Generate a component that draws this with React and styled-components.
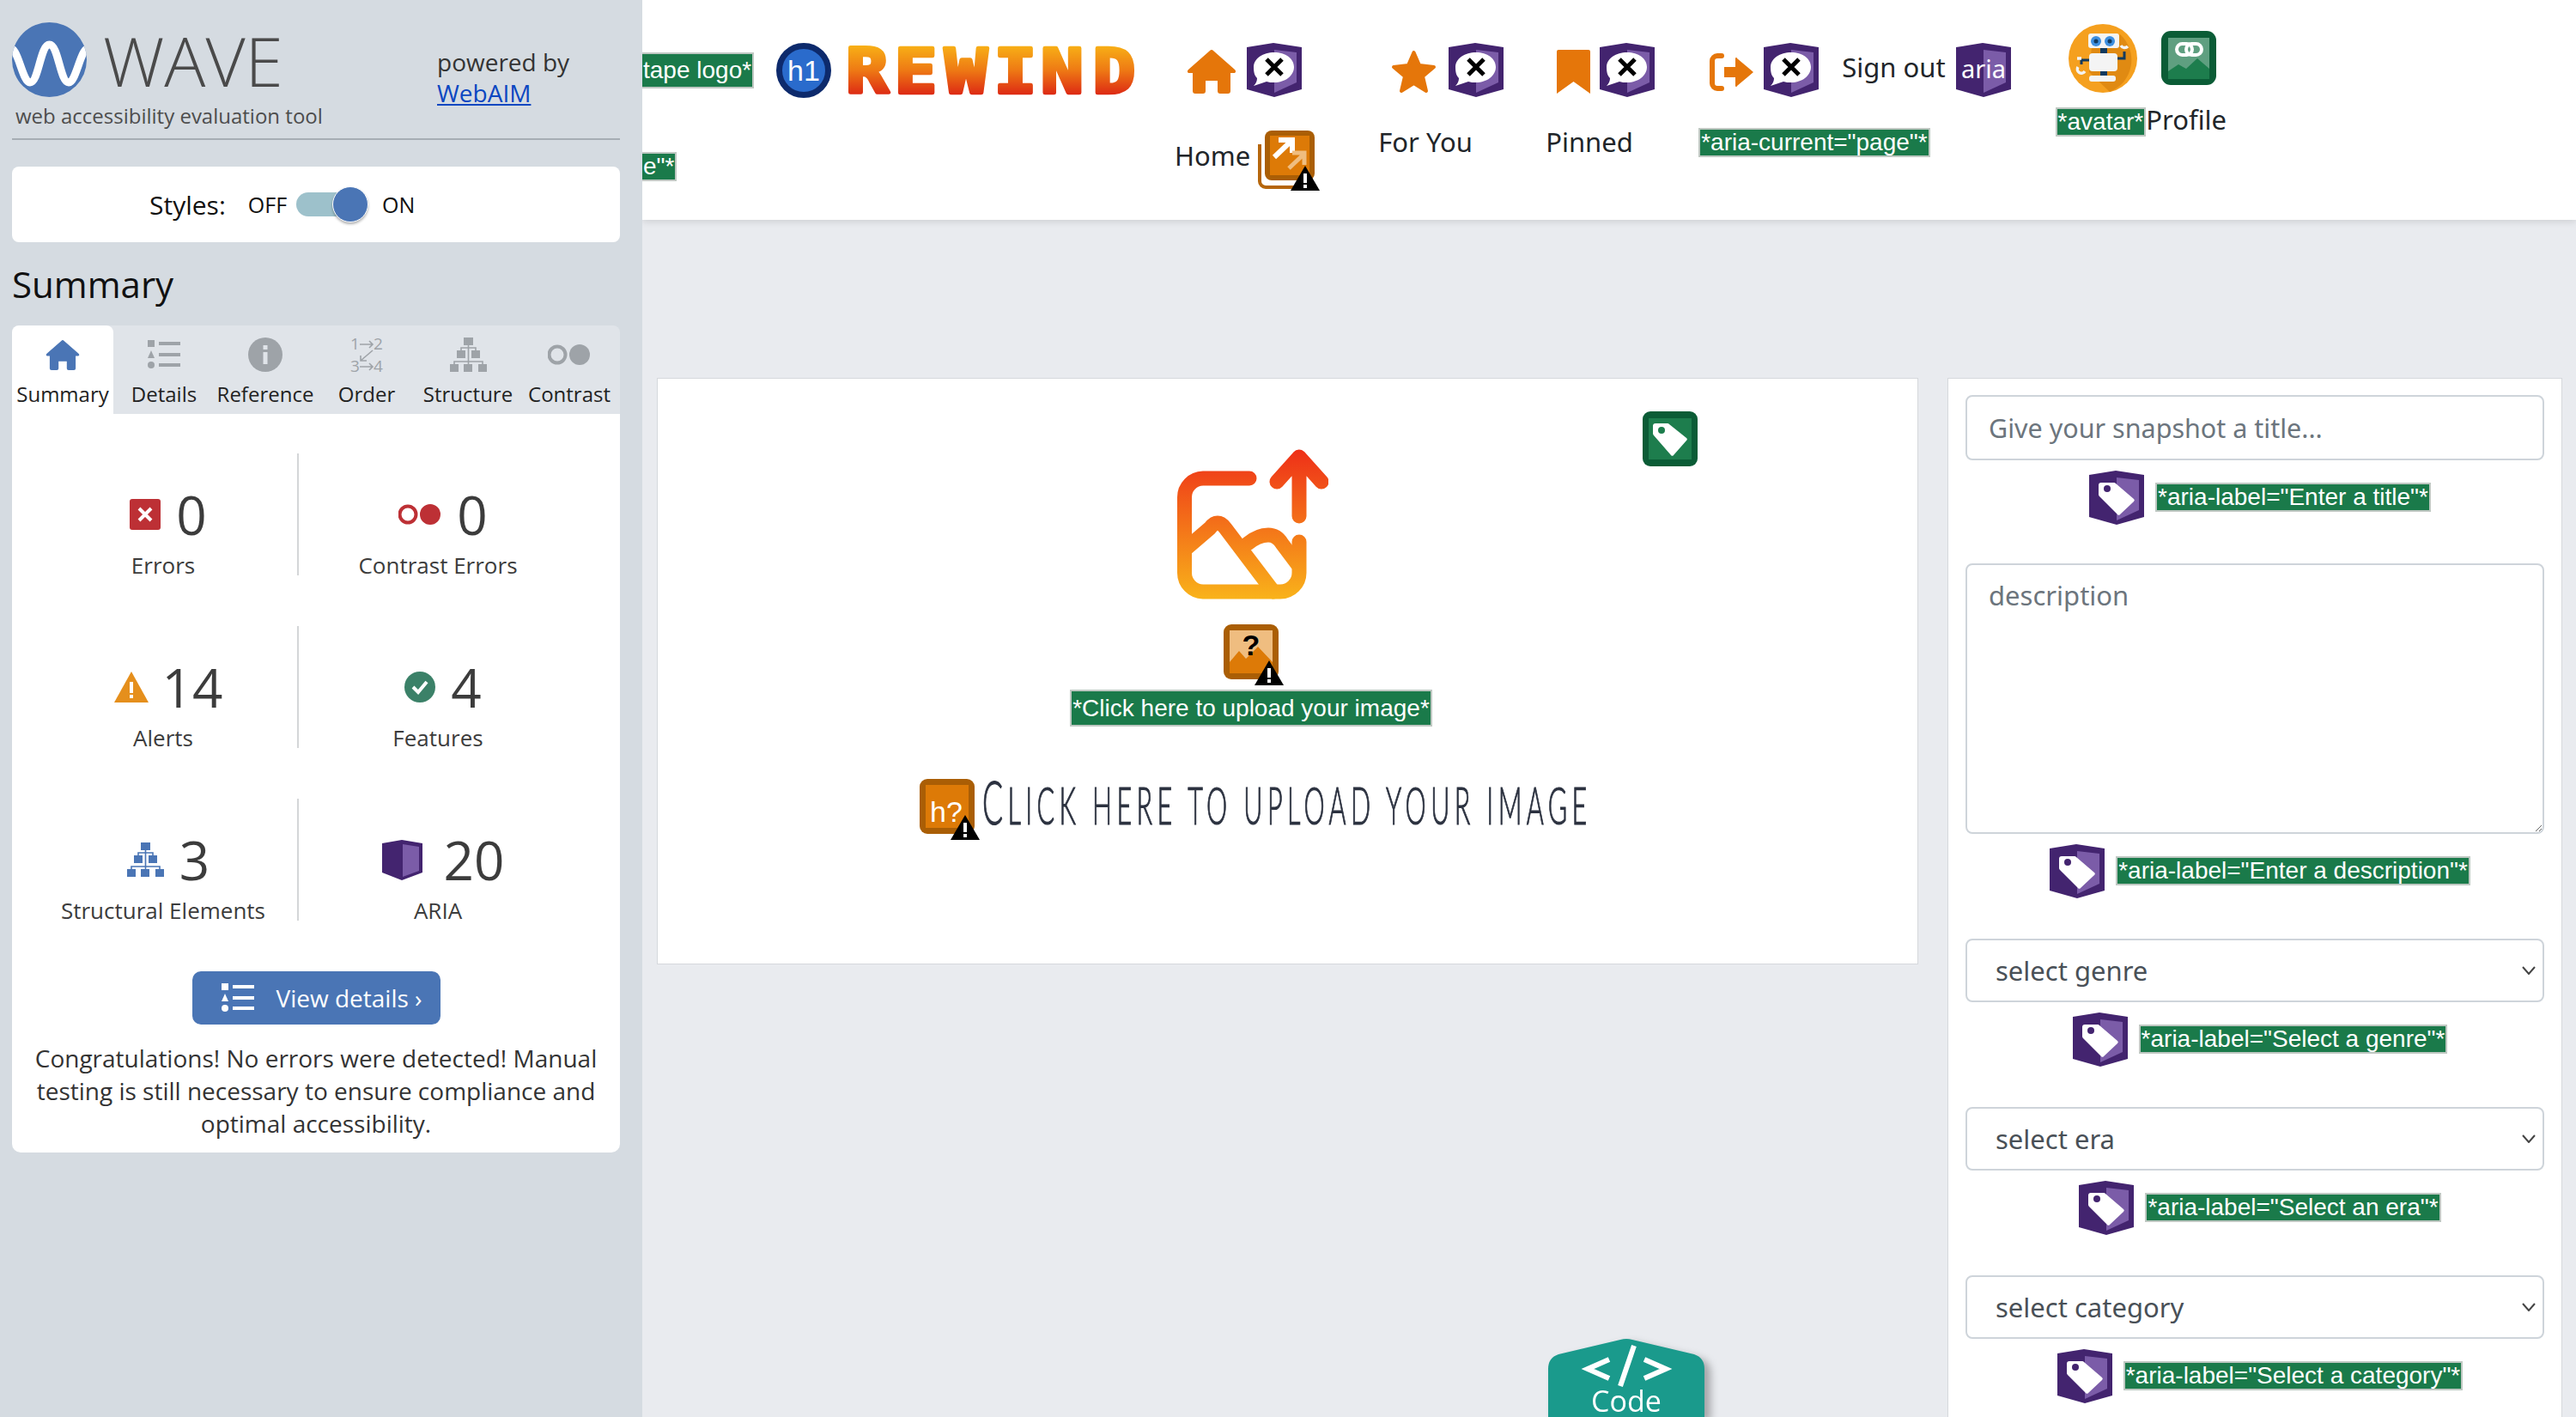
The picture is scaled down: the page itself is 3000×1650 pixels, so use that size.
import styled, { createGlobalStyle } from "styled-components";

const GlobalStyle = createGlobalStyle`
    html, body {
        margin: 0;
        padding: 0;
        background: #e9ebef;
    }
    * {
        box-sizing: border-box;
    }
`;

const sideFont = `"Open Sans", "Noto Sans", sans-serif`;
const pageFont = `"Noto Sans", "Open Sans", sans-serif`;
const labelFont = `"Liberation Sans", Arial, sans-serif`;

const Page = styled.div`
    display: flex;
    width: 3000px;
    height: 1650px;
    overflow: hidden;
    position: relative;
    background: #e9ebef;
`;

/* ---------- WAVE sidebar ---------- */

const Sidebar = styled.aside`
    flex: 0 0 748px;
    height: 100%;
    padding: 26px 26px 0 14px;
    background: #d5dbe1;
    font-family: ${sideFont};
    color: #333;
    z-index: 2;
`;

const Brand = styled.div`
    display: flex;
    height: 137px;
    border-bottom: 2px solid #a6adb4;
`;

const BrandLeft = styled.div`
    flex: 0 0 495px;
`;

const LogoRow = styled.div`
    display: flex;
    align-items: center;
    gap: 19px;
    height: 87px;
`;

const WaveName = styled.div`
    font-size: 80px;
    font-weight: 300;
    line-height: 87px;
    color: #4a4a4a;
`;

const Tagline = styled.div`
    margin: 4px 0 0 4px;
    font-size: 24px;
    line-height: 36px;
    color: #4d4d4d;
`;

const Powered = styled.div`
    padding-top: 28px;
    font-size: 28px;
    line-height: 36px;
    color: #333;
    a {
        color: #0b47c1;
        text-decoration: underline;
    }
`;

const StylesBox = styled.div`
    display: flex;
    align-items: center;
    height: 88px;
    margin-top: 31px;
    padding-left: 160px;
    background: #fff;
    border-radius: 8px;
    color: #111;
`;

const StylesLabel = styled.span`
    font-size: 30px;
    margin-right: 26px;
`;

const OnOff = styled.span`
    font-size: 25px;
`;

const Track = styled.span`
    position: relative;
    display: block;
    width: 84px;
    height: 28px;
    margin: 0 16px 0 11px;
    border-radius: 14px;
    background: #9dc1cb;
`;

const Knob = styled.span`
    position: absolute;
    right: 0;
    top: -7px;
    width: 42px;
    height: 42px;
    border-radius: 50%;
    background: #4a75b5;
    border: 1px solid #fff;
    box-shadow: 0 2px 3px rgba(0, 0, 0, 0.3);
`;

const Heading = styled.h2`
    margin: 20px 0 0;
    height: 77px;
    font-size: 42px;
    font-weight: 400;
    line-height: 58px;
    color: #111;
`;

const Tabs = styled.div`
    display: grid;
    grid-template-columns: repeat(6, 1fr);
    height: 103px;
    background: #e0e4e9;
    border-radius: 8px 8px 0 0;
`;

const Tab = styled.div`
    display: flex;
    flex-direction: column;
    align-items: center;
    padding-top: 12px;
    background: ${(p) => (p.$active ? "#fff" : "transparent")};
    border-radius: 8px 8px 0 0;
    color: ${(p) => (p.$active ? "#4a75b5" : "#9ea3a8")};
`;

const TabIcon = styled.span`
    display: flex;
    align-items: center;
    justify-content: center;
    height: 44px;
`;

const TabLabel = styled.span`
    margin-top: 7px;
    font-size: 24px;
    line-height: 34px;
    color: #222;
    white-space: nowrap;
`;

const SummaryPanel = styled.div`
    height: 860px;
    padding-top: 46px;
    background: #fff;
    border-radius: 0 0 10px 10px;
`;

const StatGrid = styled.div`
    display: grid;
    grid-template-columns: 312px 326px;
    grid-auto-rows: 142px;
    row-gap: 59px;
    margin-left: 20px;
`;

const Stat = styled.div`
    display: flex;
    flex-direction: column;
    align-items: center;
    padding-top: 40px;
    border-left: ${(p) => (p.$divided ? "2px solid #d4d6d8" : "none")};
`;

const StatTop = styled.div`
    display: flex;
    align-items: center;
    gap: ${(p) => p.$gap || 18}px;
    height: 62px;
    padding-left: 12px;
`;

const StatNum = styled.span`
    font-size: 62px;
    line-height: 62px;
    color: #3c3c3c;
`;

const StatLabel = styled.div`
    margin-top: 10px;
    font-size: 26px;
    line-height: 36px;
    color: #3c3c3c;
    white-space: nowrap;
`;

const DetailsButton = styled.div`
    display: flex;
    align-items: center;
    gap: 26px;
    width: 289px;
    height: 62px;
    margin: 59px auto 0;
    padding-left: 34px;
    background: #4a75b5;
    border-radius: 10px;
    color: #fff;
    font-size: 28px;
`;

const Congrats = styled.p`
    margin: 20px 0 0;
    padding: 0 20px;
    text-align: center;
    font-size: 28px;
    line-height: 38px;
    color: #333;
`;

/* ---------- app page ---------- */

const Content = styled.div`
    flex: 1;
    min-width: 0;
    font-family: ${pageFont};
    color: #212529;
`;

const Header = styled.header`
    display: flex;
    align-items: flex-start;
    height: 256px;
    background: #fff;
    box-shadow: 0 2px 8px rgba(0, 0, 0, 0.12);
`;

const CutLabels = styled.div`
    flex: 0 0 156px;
    display: flex;
    flex-direction: column;
    align-items: flex-start;
    padding-top: 61px;
`;

const Label = styled.span`
    display: inline-flex;
    align-items: center;
    flex: none;
    height: ${(p) => p.$h || 34}px;
    margin-top: ${(p) => p.$top || 0}px;
    padding: 0 1px;
    border: 2px solid #bfc8c2;
    border-left-width: ${(p) => (p.$cut ? 0 : 2)}px;
    background: #1a7a4a;
    color: #fff;
    font-family: ${labelFont};
    font-size: 28px;
    white-space: nowrap;
`;

const H1Badge = styled.span`
    flex: none;
    display: flex;
    align-items: center;
    justify-content: center;
    width: 64px;
    height: 64px;
    margin-top: 50px;
    border-radius: 50%;
    border: 7px solid #0d2a6c;
    background: #2a6bcc;
    color: #fff;
    font-family: ${labelFont};
    font-size: 34px;
`;

const RewindSvg = styled.svg`
    flex: none;
    display: block;
    margin: 53px 0 0 17px;
    overflow: visible;
`;

const NavItem = styled.div`
    flex: none;
    margin-left: ${(p) => p.$left}px;
    padding-top: ${(p) => p.$top || 50}px;
`;

const IconRow = styled.div`
    display: flex;
    align-items: ${(p) => p.$align || "center"};
    gap: ${(p) => p.$gap || 12}px;
    padding-left: ${(p) => p.$inset || 0}px;
`;

const NavText = styled.span`
    font-size: 31px;
    line-height: 40px;
    white-space: nowrap;
`;

const HomeText = styled(NavText)`
    margin-top: 9px;
`;

const SignOutText = styled(NavText)`
    margin: 0 0 8px 15px;
`;

const ProfileText = styled(NavText)`
    margin-bottom: 5px;
`;

const NavBelow = styled.div`
    display: flex;
    align-items: ${(p) => p.$align || "center"};
    margin-top: ${(p) => p.$top || 32}px;
    gap: ${(p) => p.$gap || 0}px;
`;

const NudgedSvg = styled.svg`
    flex: none;
    margin-top: 4px;
    color: #e5760a;
`;

const ShieldSvg = styled.svg`
    flex: none;
    display: block;
`;

const AriaWord = styled.text`
    fill: #fff;
    font-family: ${pageFont};
    font-size: 29px;
`;

const AlertWrap = styled.span`
    position: relative;
    flex: none;
    display: block;
    width: ${(p) => p.$w || 64}px;
    height: ${(p) => p.$h || 64}px;
    svg {
        display: block;
    }
`;

const TriangleSpot = styled.span`
    position: absolute;
    left: ${(p) => p.$x}px;
    top: ${(p) => p.$y}px;
`;

const Body = styled.main`
    display: grid;
    grid-template-columns: 1469px 716px;
    gap: 34px;
    padding: 184px 16px 0 17px;
`;

const UploadCard = styled.section`
    position: relative;
    display: flex;
    justify-content: center;
    height: 683px;
    padding: 82px 85px 0 0;
    background: #fff;
    border: 1px solid #d5d8dc;
`;

const UploadColumn = styled.div`
    display: flex;
    flex-direction: column;
    align-items: center;
`;

const GreenTag = styled.span`
    position: absolute;
    top: 38px;
    right: 256px;
`;

const AlertSpaced = styled.div`
    margin-top: 29px;
`;

const HeadlineRow = styled.div`
    display: flex;
    margin-top: 61px;
    width: 776px;
    margin-left: 4px;
`;

const Headline = styled.div`
    flex: none;
    width: 699px;
    margin: -2px 0 0 9px;
    font-family: Lato, "Open Sans", sans-serif;
    font-weight: 300;
    font-size: 61px;
    line-height: 56px;
    letter-spacing: 10.8px;
    text-transform: uppercase;
    white-space: nowrap;
    color: #2c3240;
    transform: scaleX(0.5);
    transform-origin: left top;
    -webkit-text-stroke: 1.2px #2c3240;
    &::first-letter {
        font-size: 71px;
    }
`;

const FormCard = styled.section`
    height: 1300px;
    padding: 19px 20px 0;
    background: #fff;
    border: 1px solid #d5d8dc;
`;

const TextInput = styled.input`
    display: block;
    width: 100%;
    height: 76px;
    padding: 0 25px;
    border: 2px solid #ced4da;
    border-radius: 8px;
    font-family: ${pageFont};
    font-size: 30.5px;
    &::placeholder {
        color: #6c757d;
        opacity: 1;
    }
`;

const TextArea = styled.textarea`
    display: block;
    width: 100%;
    height: 315px;
    margin-top: 45px;
    padding: 12px 25px;
    border: 2px solid #ced4da;
    border-radius: 8px;
    font-family: ${pageFont};
    font-size: 31px;
    line-height: 46px;
    &::placeholder {
        color: #6c757d;
        opacity: 1;
    }
`;

const SelectBox = styled.select`
    display: block;
    width: 100%;
    height: 74px;
    margin-top: 47px;
    padding: 0 40px 0 33px;
    appearance: none;
    background: #fff url("data:image/svg+xml,%3Csvg xmlns='http://www.w3.org/2000/svg' width='16' height='10'%3E%3Cpath d='M1 1l7 8 7-8' fill='none' stroke='%23444' stroke-width='2'/%3E%3C/svg%3E") no-repeat right 8px center;
    border: 2px solid #ced4da;
    border-radius: 8px;
    font-family: ${pageFont};
    font-size: 31px;
    color: #495057;
`;

const AriaRow = styled.div`
    display: flex;
    justify-content: center;
    align-items: center;
    gap: 13px;
    height: 64px;
    margin-top: 11px;
    padding-left: 12px;
`;

const CodeBadge = styled.div`
    position: absolute;
    left: 1803px;
    bottom: 0;
    filter: drop-shadow(7px 5px 5px rgba(0, 0, 0, 0.3));
    z-index: 1;
`;

const CodeShape = styled.div`
    width: 182px;
    height: 91px;
    background: #1a9a8c;
    clip-path: path("M0 91V35Q0 22 12 18L84 1Q91 -1 98 1L170 18Q182 22 182 35V91Z");
    color: #fff;
    text-align: center;
    font-family: ${sideFont};
    font-size: 34px;
    line-height: 28px;
    svg {
        display: block;
    }
`;

const UploadSvg = styled.svg`
    display: block;
    margin-left: 3px;
`;

const OrderSvg = styled.svg`
    overflow: visible;
`;

const LinkImageSvg = styled.svg`
    display: block;
    margin-top: 8px;
`;

/* ---------- drawings ---------- */

const WaveLogo = () => (
    <svg width="87" height="87" viewBox="0 0 87 87">
        <clipPath id="waveClip">
            <circle cx="43.5" cy="43.5" r="43.5" />
        </clipPath>
        <circle cx="43.5" cy="43.5" r="43.5" fill="#4a75b5" />
        <path
            clipPath="url(#waveClip)"
            d="M-4 32C6 22 12 71 21 70C31 70 33 26 43.5 26C54 26 56 70 66 70C75 71 81 22 91 32"
            fill="none"
            stroke="#fff"
            strokeWidth="9"
        />
    </svg>
);

const RewindLogo = () => (
    <RewindSvg width="337" height="57" viewBox="0 0 337 57">
        <defs>
            <linearGradient id="rewindGrad" gradientUnits="userSpaceOnUse" x1="0" y1="0" x2="0" y2="57">
                <stop offset="0" stopColor="#f8b016" />
                <stop offset="0.5" stopColor="#ee7a14" />
                <stop offset="1" stopColor="#dd2a14" />
            </linearGradient>
        </defs>
        <g transform="scale(1.14 1)">
            <text
                x="22 71.500 122.800 173.200 221 274"
                y="55"
                textAnchor="middle"
                fontFamily={`"DejaVu Sans Mono", monospace`}
                fontWeight="700"
                fontSize="72"
                fill="url(#rewindGrad)"
                stroke="url(#rewindGrad)"
                strokeWidth="4.500"
                strokeLinejoin="round"
            >
                REWIND
            </text>
        </g>
    </RewindSvg>
);

const DetailsGlyph = ({ w = 38, h = 34, fill = "currentColor" }) => (
    <svg width={w} height={h} viewBox="0 0 38 34" fill={fill}>
        <rect x="0" y="0" width="8" height="8" />
        <path d="M4 12l4 9H0z" />
        <circle cx="4" cy="29" r="4" />
        <rect x="13" y="2" width="25" height="4" />
        <rect x="13" y="15" width="25" height="4" />
        <rect x="13" y="27" width="25" height="4" />
    </svg>
);

const TreeGlyph = ({ w = 43, h = 40, fill = "currentColor" }) => (
    <svg width={w} height={h} viewBox="0 0 43 40" fill={fill} stroke={fill}>
        <g stroke="none">
            <rect x="16" y="0" width="11" height="9" />
            <rect x="8" y="15" width="10" height="9" />
            <rect x="25" y="15" width="10" height="9" />
            <rect x="0" y="31" width="10" height="9" />
            <rect x="16" y="31" width="10" height="9" />
            <rect x="33" y="31" width="10" height="9" />
        </g>
        <path d="M21.5 9v22M13 15v-3h17v3M5 31v-3h33v3" fill="none" strokeWidth="1.6" />
    </svg>
);

const RingDot = ({ fill = "currentColor", w = 50, h = 24 }) => (
    <svg width={w} height={h} viewBox="0 0 50 24">
        <circle cx="11" cy="12" r="9.5" fill="none" stroke={fill} strokeWidth="4" />
        <circle cx="37" cy="12" r="12" fill={fill} />
    </svg>
);

const housePath =
    "M29 0a3 3 0 0 1 2 1l25 22c2 2 1 4-1 4h-4v21a3 3 0 0 1-3 3h-9a3 3 0 0 1-3-3V36H22v12a3 3 0 0 1-3 3H10a3 3 0 0 1-3-3V27H3c-2 0-3-2-1-4L27 1a3 3 0 0 1 2-1z";

const InfoGlyph = () => (
    <svg width="40" height="40" viewBox="0 0 40 40">
        <circle cx="20" cy="20" r="20" fill="currentColor" />
        <rect x="17.5" y="17" width="5" height="14" fill="#e0e4e9" />
        <rect x="17.5" y="9" width="5" height="5" fill="#e0e4e9" />
    </svg>
);

const OrderGlyph = () => (
    <OrderSvg width="40" height="44" viewBox="0 0 40 44" fill="currentColor" stroke="currentColor">
        <g stroke="none" fontSize="19" fontFamily={sideFont}>
            <text x="1" y="16">1</text>
            <text x="28" y="16">2</text>
            <text x="1" y="42">3</text>
            <text x="28" y="42">4</text>
        </g>
        <path d="M12 10h15M23 6l4 4-4 4M12 36h15M23 32l4 4-4 4M27 17L13 29M13 23v6h7" fill="none" strokeWidth="1.6" />
    </OrderSvg>
);

const ErrorIcon = () => (
    <svg width="36" height="36" viewBox="0 0 36 36">
        <rect width="36" height="36" rx="3" fill="#bd3035" />
        <path d="M11 11l14 14M25 11L11 25" stroke="#fff" strokeWidth="4" />
    </svg>
);

const AlertIcon = () => (
    <svg width="40" height="36" viewBox="0 0 40 36">
        <path d="M20 0l20 36H0z" fill="#e58f1c" />
        <rect x="18" y="12" width="4" height="13" fill="#fff" />
        <rect x="18" y="27" width="4" height="4" fill="#fff" />
    </svg>
);

const CheckIcon = () => (
    <svg width="36" height="36" viewBox="0 0 36 36">
        <circle cx="18" cy="18" r="18" fill="#3b8168" />
        <path d="M10 18l6 6 10-12" fill="none" stroke="#fff" strokeWidth="4" />
    </svg>
);

const AriaBook = () => (
    <svg width="47" height="47" viewBox="0 0 47 47">
        <path d="M0 4L23 0l24 4v34l-24 9L0 38z" fill="#43246f" />
        <path d="M24 5l19 3v28l-19 7z" fill="#7b5ca8" />
    </svg>
);

const Shield = ({ kind, word }) => (
    <ShieldSvg width="64" height="63" viewBox="0 0 64 63">
        <path d="M0 5L31 0l33 5v49L32 63 0 54z" fill="#43246f" />
        <path d="M32 8l26 3v35L32 58z" fill="#7b5ca8" />
        {kind === "x" && (
            <>
                <path d="M32 11c13 0 23 7 23 17s-10 18-23 18c-4 0-6 0-9-1l-15 5c3-3 4-6 4-9-3-3-4-7-4-13 0-10 11-17 24-17z" fill="#fff" />
                <path d="M23 19l18 18M41 19L23 37" stroke="#000" strokeWidth="5" />
            </>
        )}
        {kind === "tag" && (
            <>
                <path d="M14 14h15a3 3 0 0 1 2 1l21 18a2 2 0 0 1 0 3L36 51a2 2 0 0 1-3 0L12 30a3 3 0 0 1-1-2V17a3 3 0 0 1 3-3z" fill="#fff" />
                <circle cx="21" cy="21" r="4" fill="#43246f" />
            </>
        )}
        {kind === "aria" && (
            <AriaWord x="32" y="41" textAnchor="middle">
                {word}
            </AriaWord>
        )}
    </ShieldSvg>
);

const Warn = ({ x, y }) => (
    <TriangleSpot $x={x} $y={y}>
        <svg width="34" height="29" viewBox="0 0 34 29">
            <path d="M17 0l17 29H0z" fill="#000" />
            <rect x="15" y="9" width="4" height="11" fill="#fff" />
            <rect x="15" y="22" width="4" height="4" fill="#fff" />
        </svg>
    </TriangleSpot>
);

const UnknownImage = () => (
    <AlertWrap>
        <svg width="64" height="64" viewBox="0 0 64 64">
            <rect width="64" height="64" rx="9" fill="#aa5e05" />
            <rect x="7" y="7" width="50" height="50" fill="#efbd80" />
            <path d="M7 57V44l11-13 8 9 14-14 17 18v13z" fill="#dd7a07" />
            <text x="32" y="36" textAnchor="middle" fontSize="34" fontWeight="700" fontFamily={labelFont}>
                ?
            </text>
        </svg>
        <Warn x={36} y={42} />
    </AlertWrap>
);

const HeadingAlert = () => (
    <AlertWrap>
        <svg width="64" height="64" viewBox="0 0 64 64">
            <rect width="64" height="64" rx="9" fill="#aa5e05" />
            <rect x="7" y="7" width="50" height="50" fill="#dd7a07" />
            <text x="31" y="50" textAnchor="middle" fontSize="34" fill="#fff" fontFamily={labelFont}>
                h?
            </text>
        </svg>
        <Warn x={36} y={42} />
    </AlertWrap>
);

const NewWindowAlert = () => (
    <AlertWrap $w={72} $h={70}>
        <svg width="72" height="70" viewBox="0 0 72 70">
            <path d="M2 16v43a7 7 0 0 0 7 7h34" fill="none" stroke="#b5650a" strokeWidth="4" />
            <rect x="8" y="0" width="58" height="58" rx="8" fill="#aa5e05" />
            <rect x="14" y="6" width="46" height="46" fill="#dd7a07" />
            <path d="M19 31l21-20M24 11h16v15" fill="none" stroke="#fff" strokeWidth="6" />
            <path d="M36 44l18-17M40 26h14v14" fill="none" stroke="#efbd80" strokeWidth="5" />
        </svg>
        <Warn x={38} y={41} />
    </AlertWrap>
);

const GreenTagIcon = () => (
    <svg width="64" height="64" viewBox="0 0 64 64" display="block">
        <rect width="64" height="64" rx="9" fill="#0b5c36" />
        <rect x="7" y="8" width="50" height="48" fill="#1d7d4d" />
        <path d="M15 14h14a3 3 0 0 1 2 1l20 16a2 2 0 0 1 0 3L36 51a2 2 0 0 1-3 0L13 28a3 3 0 0 1-1-2V17a3 3 0 0 1 3-3z" fill="#fff" />
        <circle cx="22" cy="22" r="4" fill="#1d7d4d" />
    </svg>
);

const UploadArt = () => (
    <UploadSvg width="176" height="175" viewBox="0 0 176 175">
        <defs>
            <linearGradient id="uploadGrad" gradientUnits="userSpaceOnUse" x1="0" y1="0" x2="0" y2="175">
                <stop offset="0" stopColor="#ee2f18" />
                <stop offset="1" stopColor="#f9b31a" />
            </linearGradient>
        </defs>
        <g fill="none" stroke="url(#uploadGrad)" strokeWidth="17" strokeLinecap="round" strokeLinejoin="round">
            <path d="M84 34H30A22 22 0 0 0 8.500 56V144A22 22 0 0 0 30 166H120A22 22 0 0 0 142 144V108" />
            <path d="M142 78V10M116 38L142 9l26 29" />
            <path d="M10 116L38 92Q47 80 56 92L112 166" />
            <path d="M82 110Q94 100 106 100Q116 100 122 110L140 134" />
        </g>
    </UploadSvg>
);

const Avatar = () => (
    <svg width="80" height="80" viewBox="0 0 80 80" display="block">
        <circle cx="40" cy="40" r="40" fill="#f5a01f" />
        <path d="M60 12a40 40 0 0 1-12 67L24 56l3-30z" fill="#e08a12" />
        <rect x="23" y="11" width="36" height="17" rx="3" fill="#f4f4f4" />
        <circle cx="32" cy="20" r="6" fill="#3d8fe0" />
        <circle cx="48" cy="20" r="6" fill="#3d8fe0" />
        <circle cx="32" cy="20" r="2.500" fill="#123a5e" />
        <circle cx="48" cy="20" r="2.500" fill="#123a5e" />
        <rect x="37" y="28" width="8" height="33" fill="#123a5e" />
        <rect x="24" y="34" width="33" height="21" rx="4" fill="#f4f4f4" />
        <rect x="24" y="60" width="31" height="7" rx="3" fill="#f4f4f4" />
        <path d="M24 42H15V47M57 40h8V32" fill="none" stroke="#123a5e" strokeWidth="3" />
        <path d="M11 50a4 4 0 0 0 8 5M10 40h5" fill="none" stroke="#f4f4f4" strokeWidth="3.500" />
        <path d="M61 25a5 5 0 0 0 8 1" fill="none" stroke="#f4f4f4" strokeWidth="3.500" />
    </svg>
);

const LinkImage = () => (
    <LinkImageSvg width="64" height="63" viewBox="0 0 64 63">
        <rect width="64" height="63" rx="11" fill="#0b5c36" />
        <rect x="8" y="8" width="48" height="48" fill="#5f9f80" />
        <path d="M8 47l12-8 9 5 13-12 14 12v12H8z" fill="#1d7d4d" />
        <g fill="none" stroke="#fff" strokeWidth="4">
            <rect x="18" y="15" width="18" height="13" rx="6.500" />
            <rect x="29" y="15" width="18" height="13" rx="6.500" />
        </g>
    </LinkImageSvg>
);

const stats = [
    { icon: <ErrorIcon />, num: "0", label: "Errors" },
    { icon: <RingDot fill="#bd3035" />, num: "0", label: "Contrast Errors", divided: true },
    { icon: <AlertIcon />, num: "14", label: "Alerts", gap: 16 },
    { icon: <CheckIcon />, num: "4", label: "Features", divided: true },
    { icon: <TreeGlyph fill="#4a75b5" />, num: "3", label: "Structural Elements" },
    { icon: <AriaBook />, num: "20", label: "ARIA", divided: true, gap: 25 },
];

const tabs = [
    {
        label: "Summary",
        icon: (
            <svg width="40" height="35" viewBox="0 0 58 51" fill="currentColor">
                <path d={housePath} />
            </svg>
        ),
        active: true,
    },
    { label: "Details", icon: <DetailsGlyph /> },
    { label: "Reference", icon: <InfoGlyph /> },
    { label: "Order", icon: <OrderGlyph /> },
    { label: "Structure", icon: <TreeGlyph /> },
    { label: "Contrast", icon: <RingDot /> },
];

const selects = [
    { text: "select genre", aria: "Select a genre" },
    { text: "select era", aria: "Select an era" },
    { text: "select category", aria: "Select a category" },
];

const AriaField = ({ aria }) => (
    <AriaRow>
        <Shield kind="tag" />
        <Label>{`*aria-label="${aria}"*`}</Label>
    </AriaRow>
);

const App = () => {
    return (
        <Page>
            <GlobalStyle />
            <Sidebar>
                <Brand>
                    <BrandLeft>
                        <LogoRow>
                            <WaveLogo />
                            <WaveName>WAVE</WaveName>
                        </LogoRow>
                        <Tagline>web accessibility evaluation tool</Tagline>
                    </BrandLeft>
                    <Powered>
                        powered by
                        <br />
                        <a href="#webaim">WebAIM</a>
                    </Powered>
                </Brand>
                <StylesBox>
                    <StylesLabel>Styles:</StylesLabel>
                    <OnOff>OFF</OnOff>
                    <Track>
                        <Knob />
                    </Track>
                    <OnOff>ON</OnOff>
                </StylesBox>
                <Heading>Summary</Heading>
                <Tabs>
                    {tabs.map((t) => (
                        <Tab key={t.label} $active={t.active}>
                            <TabIcon>{t.icon}</TabIcon>
                            <TabLabel>{t.label}</TabLabel>
                        </Tab>
                    ))}
                </Tabs>
                <SummaryPanel>
                    <StatGrid>
                        {stats.map((s) => (
                            <Stat key={s.label} $divided={s.divided}>
                                <StatTop $gap={s.gap}>
                                    {s.icon}
                                    <StatNum>{s.num}</StatNum>
                                </StatTop>
                                <StatLabel>{s.label}</StatLabel>
                            </Stat>
                        ))}
                    </StatGrid>
                    <DetailsButton>
                        <DetailsGlyph fill="#fff" />
                        <span>View details ›</span>
                    </DetailsButton>
                    <Congrats>
                        Congratulations! No errors were detected! Manual testing is still necessary to ensure compliance and optimal accessibility.
                    </Congrats>
                </SummaryPanel>
            </Sidebar>

            <Content>
                <Header>
                    <CutLabels>
                        <Label $cut $h={42}>tape logo*</Label>
                        <Label $cut $top={74}>e"*</Label>
                    </CutLabels>
                    <H1Badge>h1</H1Badge>
                    <RewindLogo />

                    <NavItem $left={46}>
                        <IconRow $inset={14}>
                            <NudgedSvg width="58" height="51" viewBox="0 0 58 51" fill="currentColor">
                                <path d={housePath} />
                            </NudgedSvg>
                            <Shield kind="x" />
                        </IconRow>
                        <NavBelow $top={39} $gap={9} $align="flex-start">
                            <HomeText>Home</HomeText>
                            <NewWindowAlert />
                        </NavBelow>
                    </NavItem>

                    <NavItem $left={68}>
                        <IconRow $inset={15} $gap={14}>
                            <NudgedSvg width="53" height="51" viewBox="0 0 53 51" fill="currentColor" stroke="currentColor" strokeWidth="4" strokeLinejoin="round">
                                <path d="M26.500 3l6.500 15 17 2-13 11 4 17-14.500-9-14.500 9 4-17-13-11 17-2z" />
                            </NudgedSvg>
                            <Shield kind="x" />
                        </IconRow>
                        <NavBelow>
                            <NavText>For You</NavText>
                        </NavBelow>
                    </NavItem>

                    <NavItem $left={49}>
                        <IconRow $inset={13} $gap={11}>
                            <NudgedSvg width="39" height="51" viewBox="0 0 39 51" fill="currentColor">
                                <path d="M2 0h35a2 2 0 0 1 2 2v49L19.500 37 0 51V2a2 2 0 0 1 2-2z" />
                            </NudgedSvg>
                            <Shield kind="x" />
                        </IconRow>
                        <NavBelow>
                            <NavText>Pinned</NavText>
                        </NavBelow>
                    </NavItem>

                    <NavItem $left={51}>
                        <IconRow $inset={13}>
                            <NudgedSvg width="51" height="44" viewBox="0 0 51 44" fill="currentColor">
                                <path d="M14 3H9a6 6 0 0 0-6 6v26a6 6 0 0 0 6 6h5" fill="none" stroke="currentColor" strokeWidth="6" strokeLinecap="round" />
                                <path d="M17 16h13V6a1 1 0 0 1 2 0l19 16-19 16a1 1 0 0 1-2 0V28H17z" />
                            </NudgedSvg>
                            <Shield kind="x" />
                            <SignOutText>Sign out</SignOutText>
                            <Shield kind="aria" word="aria" />
                        </IconRow>
                        <NavBelow $top={36}>
                            <Label>*aria-current="page"*</Label>
                        </NavBelow>
                    </NavItem>

                    <NavItem $left={52} $top={28}>
                        <IconRow $inset={15} $gap={28} $align="flex-start">
                            <Avatar />
                            <LinkImage />
                        </IconRow>
                        <NavBelow $top={11}>
                            <Label>*avatar*</Label>
                            <ProfileText>Profile</ProfileText>
                        </NavBelow>
                    </NavItem>
                </Header>

                <Body>
                    <UploadCard>
                        <GreenTag>
                            <GreenTagIcon />
                        </GreenTag>
                        <UploadColumn>
                            <UploadArt />
                            <AlertSpaced>
                                <UnknownImage />
                            </AlertSpaced>
                            <Label $h={43} $top={12}>*Click here to upload your image*</Label>
                            <HeadlineRow>
                                <HeadingAlert />
                                <Headline>Click here to upload your image</Headline>
                            </HeadlineRow>
                        </UploadColumn>
                    </UploadCard>

                    <FormCard>
                        <TextInput placeholder="Give your snapshot a title..." readOnly />
                        <AriaField aria="Enter a title" />
                        <TextArea placeholder="description" readOnly />
                        <AriaField aria="Enter a description" />
                        {selects.map((s) => (
                            <div key={s.text}>
                                <SelectBox defaultValue={s.text}>
                                    <option>{s.text}</option>
                                </SelectBox>
                                <AriaField aria={s.aria} />
                            </div>
                        ))}
                    </FormCard>
                </Body>
            </Content>

            <CodeBadge>
                <CodeShape>
                    <svg width="182" height="58" viewBox="0 0 182 58">
                        <path d="M71 24L46 35l25 11M112 24l25 11-25 11M100 8L84 55" fill="none" stroke="#fff" strokeWidth="6" />
                    </svg>
                    Code
                </CodeShape>
            </CodeBadge>
        </Page>
    );
};

export default App;
